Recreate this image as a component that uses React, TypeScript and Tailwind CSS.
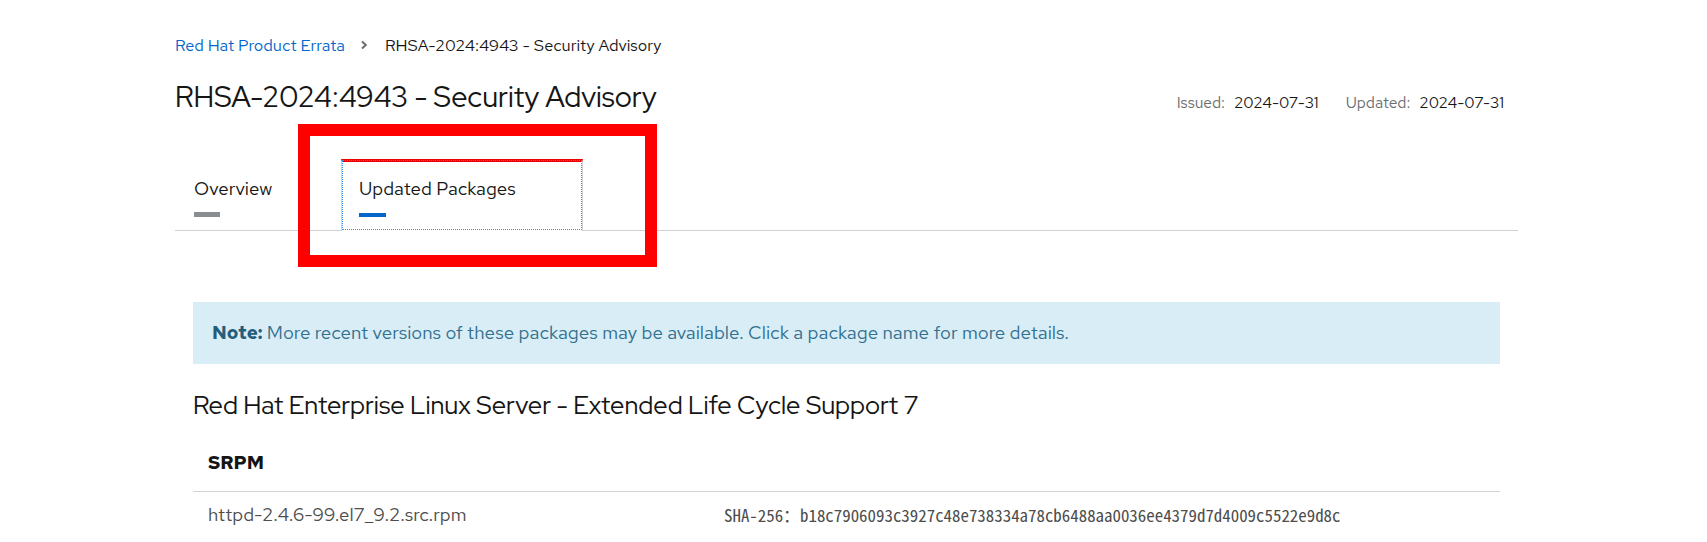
import React from "react";

const sans = "font-['Red_Hat_Text','Open_Sans','Liberation_Sans',sans-serif]";
const display = "font-['Red_Hat_Display','Open_Sans','Liberation_Sans',sans-serif]";

function Breadcrumb() {
  return (
    <nav className={`flex items-center text-[16.4px] leading-5 ${sans}`}>
      <a className="text-[#0066cc]">Red Hat Product Errata</a>
      <svg viewBox="0 0 10 10" className="ml-[14px] mr-[16px] h-[10px] w-[10px]" aria-hidden>
        <path d="M3 1.5 6.8 5 3 8.5" fill="none" stroke="#6a6e73" strokeWidth="2" />
      </svg>
      <span className="text-[#151515]">RHSA-2024:4943 - Security Advisory</span>
    </nav>
  );
}

function Tabs() {
  return (
    <div className={`flex h-[72px] border-b border-[#d2d2d2] ${sans}`}>
      <div className="flex w-[166px] flex-col border-t-[3px] border-transparent pl-[19px] pt-[15px]">
        <span className="text-[18.7px] leading-6 text-[#151515]">Overview</span>
        <span className="mt-[11px] h-[5px] w-[26px] bg-[#8a8d90]" />
      </div>
      <div className="relative -mb-px flex h-[72px] w-[242px] flex-col border-x border-t-[3px] border-x-[#d2d2d2] border-t-[#ee0000] bg-white pl-[17px] pt-[15px] outline-1 outline-offset-[-2px] outline-dotted outline-[#3b8de0]">
        <span className="text-[18.7px] leading-6 text-[#151515]">Updated Packages</span>
        <span className="mt-[12px] h-[4px] w-[27px] bg-[#0066cc]" />
      </div>
    </div>
  );
}

export default function App() {
  return (
    <div className="relative h-[542px] w-full overflow-hidden bg-white">
      <div className="ml-[175px] w-[1343px] pt-[35px]">
        <Breadcrumb />

        <div className="mt-[24px] flex items-start justify-between pr-[14px]">
          <h1 className={`text-[28.8px] leading-9 text-[#151515] ${display}`}>
            RHSA-2024:4943 - Security Advisory
          </h1>
          <div className={`mt-[14px] flex text-[15.6px] leading-5 ${sans}`}>
            <span className="text-[#6a6e73]">Issued:</span>
            <span className="ml-[9px] text-[#151515]">2024-07-31</span>
            <span className="ml-[27px] text-[#6a6e73]">Updated:</span>
            <span className="ml-[9px] text-[#151515]">2024-07-31</span>
          </div>
        </div>

        <div className="mt-[44px]">
          <Tabs />
        </div>

        <div className="px-[18px]">
          <div className={`mt-[71px] bg-[#d9edf7] px-[19px] py-[19px] text-[18.8px] leading-6 text-[#31708f] ${sans}`}>
            <strong className="font-bold text-[#245d7a]">Note:</strong> More recent versions of these packages may be
            available. Click a package name for more details.
          </div>

          <h2 className={`mt-[25px] text-[25.4px] leading-8 text-[#151515] ${display}`}>
            Red Hat Enterprise Linux Server - Extended Life Cycle Support 7
          </h2>

          <div className={`mt-[30px] border-b border-[#d2d2d2] px-[15px] pb-[16px] text-[18.7px] font-bold leading-6 text-[#151515] ${sans}`}>
            SRPM
          </div>
          <div className="flex pt-[11px] leading-6">
            <div className={`w-[519px] px-[15px] text-[18.7px] text-[#4d4d4d] ${sans}`}>
              httpd-2.4.6-99.el7_9.2.src.rpm
            </div>
            <div className="px-[12px] font-['Noto_Sans_Mono_CJK_SC','Liberation_Mono',monospace] text-[16.9px] text-[#4d4d4d]">
              SHA-256：b18c7906093c3927c48e738334a78cb6488aa0036ee4379d7d4009c5522e9d8c
            </div>
          </div>
        </div>
      </div>

      <div className="absolute left-[298px] top-[124px] h-[143px] w-[359px] border-[12px] border-[#ff0000]" />
    </div>
  );
}
